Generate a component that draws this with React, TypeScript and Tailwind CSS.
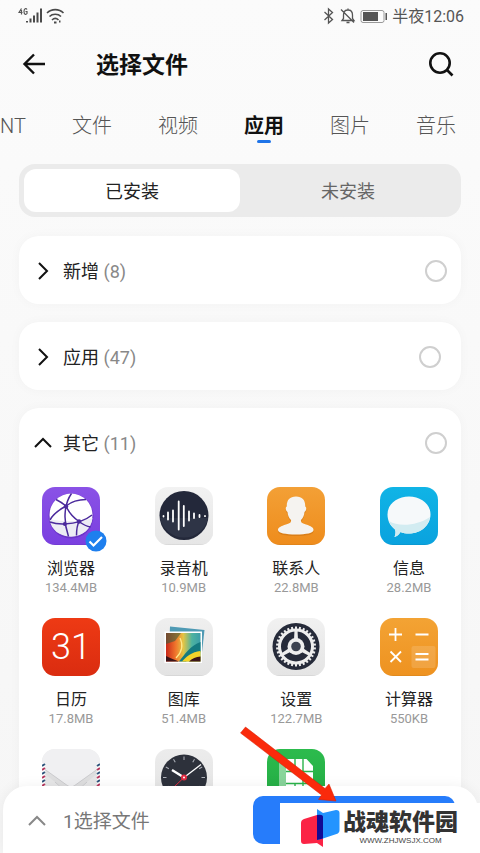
import React, { useState } from "react";

const GEAR_TEETH = Array.from({ length: 30 }, (_, i) => i * 12);

function Tile({ id, from, to, children }: { id: string; from: string; to: string; children?: React.ReactNode }) {
  return (
    <svg viewBox="0 0 58 58" className="block size-[58px]" aria-hidden="true">
      <defs>
        <linearGradient id={id} x1="0" y1="0" x2="0" y2="1">
          <stop offset="0" stopColor={from} />
          <stop offset="1" stopColor={to} />
        </linearGradient>
        <clipPath id={id + "-clip"}>
          <rect width="58" height="58" rx="13" />
        </clipPath>
      </defs>
      <g clipPath={`url(#${id}-clip)`}>
        <rect width="58" height="58" fill={`url(#${id})`} />
        <path d="M0 45c0 9 5 12.500 13 12.500h32c8 0 13-3.500 13-12.500v13H0z" fill="#000" opacity=".1" />
        {children}
      </g>
    </svg>
  );
}

const BrowserIcon = () => (
  <Tile id="browser" from="#8a52e6" to="#7a3fe0">
    <circle cx="29" cy="29" r="22.500" fill="#5a25b4" opacity=".5" />
    <circle cx="29" cy="28" r="21.500" fill="#fff" />
    <path d="M7.500 32c10 3 32 3 43-1-1 11-10 18.500-21.500 18.500S9 43 7.500 32z" fill="#ececf4" />
    <g fill="none" stroke="#4b2a9c" strokeWidth="1.500">
      <path d="M29.500 6.500C22 17 21 34 26.500 49.500" />
      <path d="M14 12.500c4 2 7 4 10 6.500c3 7 8 12 13 15.500c4 3 8 5 11.500 5.500" />
      <path d="M44 12.500C37 12.500 29 15 24 19C15 24 10 29 8 33" />
      <path d="M8 35c4 1.500 9 2.200 14.500 2C34 36.500 44 33 50 28M37 34.500c-2 4-2.500 9-2.500 14" />
    </g>
    <g fill="#4b2a9c">
      <circle cx="24" cy="19.500" r="2.200" />
      <circle cx="37" cy="34.500" r="2.200" />
      <circle cx="22.800" cy="37" r="2" />
    </g>
  </Tile>
);

const RecorderIcon = () => (
  <Tile id="recorder" from="#f2f2f2" to="#e6e6e6">
    <circle cx="29" cy="28.500" r="24.500" fill="#23283a" />
    <path d="M5 31h48a24.500 24.500 0 0 1-48 0z" fill="#2e3446" />
    <g stroke="#fff" strokeWidth="1.800" strokeLinecap="round">
      <path d="M8.500 29v.500M13 25.500v7M18 23.500v11M23.700 14.500v28M28.800 19v20M34 24.500v9M39 26.500v4.500M44.500 28v2M50 29v.200" />
    </g>
  </Tile>
);

const ContactsIcon = () => (
  <Tile id="contacts" from="#f3a036" to="#ee8c1c">
    <path
      d="M29 10c6.500 0 9.500 4 9.200 10 1.600.500 1.300 4-.700 5.500-.500 4-1.500 6-3.500 8-.500 3 1.500 3.500 5 4.500 5 1.500 7.500 3 7.500 5.500 0 3-7 4.500-17.500 4.500S11 46.500 11 43.500C11 41 14 39.500 19 38c3.500-1 5.500-1.500 5-4.500-2-2-3-4-3.500-8-2-1.500-2.300-5-.700-5.500C19.500 14 22.500 10 29 10z"
      fill="#a85a08"
      opacity=".3"
      transform="translate(0 1)"
    />
    <path
      d="M29 9.500c6.500 0 9.500 4 9.200 10 1.600.500 1.300 4-.700 5.500-.500 4-1.500 6-3.500 8-.500 3 1.500 3.500 5 4.500 5 1.500 7.500 3 7.500 5.500 0 3-7 4.500-17.500 4.500S11 46 11 43c0-2.500 3-4 8-5.500 3.500-1 5.500-1.500 5-4.500-2-2-3-4-3.500-8-2-1.500-2.300-5-.700-5.500-.300-6 2.700-10 9.200-10z"
      fill="#f5f3f0"
    />
  </Tile>
);

const MessageIcon = () => (
  <Tile id="message" from="#10b4e6" to="#0aa2de">
    <path d="M29 9.500c12 0 21.500 7.500 21.500 18S41 46.500 29 46.500c-3 0-6-.500-8.500-1.500-1.500 2.500-3.500 4.500-6 5 1-2.500 1.500-5 .5-7.500-4.500-3.500-7.500-8.500-7.500-15 0-10.500 9.500-18 21.500-18z" fill="#f6f9fa" />
    <path d="M9 34c9 6 28 5 41-4-1.500 10-10 16.500-21 16.500-3 0-6-.500-8.500-1.500-1.500 2.500-3.500 4.500-6 5 1-2.500 1.500-5 .5-7.500-3-2.300-5-5.500-6-8.500z" fill="#d2ecf1" />
  </Tile>
);

const CalendarIcon = () => (
  <span className="flex size-[58px] items-center justify-center rounded-[13px] bg-linear-to-b from-[#ee3a14] to-[#da2c10] text-[36px] leading-[58px] font-light text-white">
    31
  </span>
);

const GalleryIcon = () => (
  <Tile id="gallery" from="#efefef" to="#e3e3e3">
    <defs>
      <linearGradient id="photo" x1="0" y1="0" x2="1" y2="0">
        <stop offset="0" stopColor="#c9281a" />
        <stop offset=".28" stopColor="#f0762c" />
        <stop offset=".5" stopColor="#e4c543" />
        <stop offset=".75" stopColor="#4db3a0" />
        <stop offset="1" stopColor="#3a9da8" />
      </linearGradient>
    </defs>
    <path d="M15 8.500l34.500 3.500-3.500 31-32-8z" fill="#4f9ab4" />
    <path d="M9.500 13.500h37.500v31.500H9.500z" fill="#fff" />
    <path d="M11 15h34.500v28.500H11z" fill="url(#photo)" />
    <path d="M11 15h15l-6 8-9 3z" fill="#39603f" opacity=".6" />
    <path d="M24 43.500C29 37 36 27 45.500 24v10L31 43.500z" fill="#147a80" />
    <path d="M27 43.500c4-5 10-9.500 18.500-10.500v10.500z" fill="#f3d32a" />
    <path d="M34 43.500c3-3 7-4.500 11.500-5v5zM11 38c4 2 9 4 13 5.500H11z" fill="#3b1418" />
    <path d="M25 20c4 8 1 15-4 20" fill="none" stroke="#ffe98a" strokeWidth="1.200" />
  </Tile>
);

const SettingsIcon = () => (
  <Tile id="settings" from="#f1f1f1" to="#e4e4e4">
    <circle cx="29" cy="28.500" r="23.500" fill="#262b3a" />
    <circle cx="29" cy="28.500" r="16.500" fill="none" stroke="#eee" strokeWidth="3" />
    {GEAR_TEETH.map((angle) => (
      <path key={angle} d="M28 8.500h2v4h-2z" fill="#eee" transform={`rotate(${angle} 29 28.500)`} />
    ))}
    {[0, 120, 240].map((angle) => (
      <path key={angle} d="M27.500 12h3l.5 10h-4z" fill="#eee" transform={`rotate(${angle} 29 28.500)`} />
    ))}
    <circle cx="29" cy="28.500" r="8.500" fill="#eee" />
    <circle cx="29" cy="28.500" r="4.800" fill="#3c4250" />
  </Tile>
);

const CalculatorIcon = () => (
  <Tile id="calculator" from="#f3a334" to="#ee9220">
    <rect x="31.500" y="28" width="24" height="22" rx="2" fill="#fff" opacity=".14" />
    <g stroke="#fff" strokeWidth="1.800">
      <path d="M9 16.500h13M15.500 10v13M35.500 16.500h13M35.500 36h13M35.500 41.500h13M10.500 33.500l10.500 10.500M21 33.500L10.500 44" />
    </g>
  </Tile>
);

const MailIcon = () => (
  <Tile id="mail" from="#ececec" to="#dedede">
    <path d="M4 20h50v38H4z" fill="#dededf" />
    <path d="M3 25l20 16L3 58zM55 25L35 41l20 17z" fill="#e6e6e7" />
    <path d="M0 0h58v18L32 37q-3 2-6 0L0 18z" fill="#f0f0f2" />
    <path d="M3 20.500L26 37q3 2 6 0l23-16.500M13 33l10 9M45 33l-10 9" fill="none" stroke="#c8c8cc" strokeWidth=".900" />
    <path d="M1.500 14v44M56.500 14v44" stroke="#fff" strokeWidth="3" />
    <path d="M0 17l3-2M0 25l3-2M0 33l3-2M0 41l3-2M55 17l3-2M55 25l3-2M55 33l3-2M55 41l3-2" stroke="#31577d" strokeWidth="2" />
    <path d="M0 21l3-2M0 29l3-2M0 37l3-2M55 21l3-2M55 29l3-2M55 37l3-2" stroke="#b63a60" strokeWidth="2" />
  </Tile>
);

const ClockIcon = () => (
  <Tile id="clock" from="#ececec" to="#e2e2e2">
    <circle cx="29" cy="28.500" r="23" fill="#2d313b" />
    <g stroke="#aeb2ba" strokeWidth="1">
      {[0, 30, 60, 90, 120, 150, 180, 210, 240, 270, 300, 330].map((angle) => (
        <path key={angle} d="M29 7.500v3.500" transform={`rotate(${angle} 29 28.500)`} />
      ))}
    </g>
    <path d="M29 28.500L17 21" stroke="#fff" strokeWidth="2.400" />
    <path d="M29 28.500L46 15.500" stroke="#fff" strokeWidth="1.300" />
    <path d="M29 28.500L19 38" stroke="#e12b42" strokeWidth="1" />
    <circle cx="29" cy="28.500" r="3" fill="#e12b42" />
    <circle cx="29" cy="28.500" r="1" fill="#fff" />
  </Tile>
);

const SimIcon = () => (
  <Tile id="sim" from="#2cbb4d" to="#22a842">
    <path d="M12 10h7v48h-7z" fill="#fff" opacity=".45" />
    <path d="M19 10h20.500l6.500 7v41H19z" fill="#fff" />
    <path d="M19 22.500h27M19 34.500h27M28 10v12.500M36 10v48M28 34.500V58" stroke="#2ab24a" strokeWidth="1.400" />
  </Tile>
);

type AppFile = { name: string; size: string; icon: () => React.JSX.Element };

const APPS: AppFile[] = [
  { name: "浏览器", size: "134.4MB", icon: BrowserIcon },
  { name: "录音机", size: "10.9MB", icon: RecorderIcon },
  { name: "联系人", size: "22.8MB", icon: ContactsIcon },
  { name: "信息", size: "28.2MB", icon: MessageIcon },
  { name: "日历", size: "17.8MB", icon: CalendarIcon },
  { name: "图库", size: "51.4MB", icon: GalleryIcon },
  { name: "设置", size: "122.7MB", icon: SettingsIcon },
  { name: "计算器", size: "550KB", icon: CalculatorIcon },
];

const MORE_APPS = [MailIcon, ClockIcon, SimIcon];

const TABS = ["NT", "文件", "视频", "应用", "图片", "音乐"];

function StatusBar() {
  return (
    <div className="flex h-8 items-center justify-between pr-4 pl-[18px] text-[#555]">
      <svg width="47" height="18" viewBox="0 0 47 18" aria-hidden="true">
        <g fill="none" stroke="#555" strokeWidth="1.200">
          <path d="M3.500 1.500L1 5.500h3.500M3.500 3v4.500M9 2.500C8 1 6 1.500 6 4.500S8 8 9 6.500v-2H7.500" />
        </g>
        <path d="M9 15.500v-1.500M12.500 15.500v-4M16 15.500V8.500M19.500 15.500V5.500M23 15.500v-14" stroke="#4a4a4a" strokeWidth="2" />
        <g fill="none" stroke="#4a4a4a" strokeWidth="1.600">
          <path d="M29 6c4.500-4.500 12-4.500 16.500 0M31.500 9.500c3-3 8.500-3 11.500 0M34 13c2-2 4.500-2 6.500 0" />
        </g>
        <path d="M36 15.500h2.500M41 14.500h1.500" stroke="#4a4a4a" strokeWidth="2" />
      </svg>
      <div className="flex items-center">
        <svg width="65" height="18" viewBox="0 0 65 18" aria-hidden="true">
          <g fill="none" stroke="#555" strokeWidth="1.300">
            <path d="M1.500 5l8 7.500-4 3.500V2l4 3.500-8 7.500" />
            <path d="M19 13.500h12l-1.500-2V8c0-3-1.500-5-4.500-5s-4.500 2-4.500 5v3.500zM18 2.500l13 13M23.500 15.500h3M25 3V1.500" />
            <rect x="38" y="3.500" width="23" height="12" rx="2" stroke="#999" strokeWidth="1" />
          </g>
          <path d="M40 5h15v9H40z" fill="#555" />
          <path d="M62.500 6h1.500v7h-1.500z" fill="#555" />
        </svg>
        <span className="ml-1 pt-0.5 text-base leading-5 text-[#555]">半夜12:06</span>
      </div>
    </div>
  );
}

function Chevron({ up, className }: { up?: boolean; className: string }) {
  return (
    <svg viewBox="0 0 20 20" className={className} fill="none" stroke="currentColor" strokeWidth="2" aria-hidden="true">
      <path d={up ? "M2 14l8-8 8 8" : "M6 2l8 8-8 8"} />
    </svg>
  );
}

function GroupHeader({ label, count, open, inset }: { label: string; count: number; open?: boolean; inset: string }) {
  return (
    <div className={"flex h-[68px] items-center justify-between pt-0.5 pl-3.5 " + inset}>
      <button type="button" aria-expanded={!!open} className="flex items-center gap-2.5 text-lg leading-6 text-[#222]">
        <Chevron up={open} className="size-5 text-[#111]" />
        <span className="pt-0.5">
          {label} <span className="text-[#888]">({count})</span>
        </span>
      </button>
      <input
        type="checkbox"
        aria-label={label}
        className="size-[22px] appearance-none rounded-full border-2 border-[#cfcfcf] checked:border-[#267cfb] checked:bg-[#267cfb]"
      />
    </div>
  );
}

function AppItem({ app, defaultChecked }: { app: AppFile; defaultChecked: boolean }) {
  const Icon = app.icon;
  return (
    <label className="relative flex w-[58px] flex-col items-center">
      <input type="checkbox" defaultChecked={defaultChecked} className="peer sr-only" />
      <Icon />
      <svg viewBox="0 0 22 22" className="absolute top-[43px] left-[43px] hidden size-[22px] peer-checked:block" aria-hidden="true">
        <circle cx="11" cy="11" r="10.500" fill="#1e7fee" />
        <path d="M4.500 11.500l4 4L17 7" fill="none" stroke="#fff" strokeWidth="2.200" />
      </svg>
      <span className="mt-3.5 text-base leading-5 whitespace-nowrap text-[#222]">{app.name}</span>
      <span className="text-[13px] leading-[18px] text-[#999]">{app.size}</span>
    </label>
  );
}

function SiteMark() {
  return (
    <div className="absolute right-0 bottom-0 flex h-[50px] w-[200px] items-start bg-white pl-[21px]">
      <svg width="39" height="38" viewBox="0 0 39 38" className="mt-1.5 shrink-0" aria-hidden="true">
        <path d="M0 14q0-3 3-4l13-4q6-1 6 2v30l-6-4-13 1q-3 0-3-3z" fill="#fb2345" />
        <path d="M16 0l6 4 13-3q3.500 0 3.500 3v17q0 3-3 4L22 29.500l-6 1.500z" fill="#2394ff" />
        <path d="M16 6q6-1 6 2v21.500l-6 1.500z" fill="#120a94" />
      </svg>
      <div className="ml-[3px] flex flex-col items-center pt-1.5">
        <span className="text-[23px] leading-[27px] font-black whitespace-nowrap text-[#333]">战魂软件园</span>
        <span className="font-['Liberation_Sans',sans-serif] text-[8px] leading-[10px] text-[#444]">WWW.ZHJWSJX.COM</span>
      </div>
    </div>
  );
}

export default function App() {
  const [tab, setTab] = useState("应用");
  return (
    <div className="relative flex h-screen flex-col overflow-hidden bg-linear-to-b from-[#fbfbfb] to-[#f6f6f6] font-['Roboto','Noto_Sans_CJK_SC',sans-serif]">
      <StatusBar />
      <header className="flex h-16 shrink-0 items-center pr-[25px] pl-[21px]">
        <button type="button" aria-label="返回">
          <svg viewBox="0 0 26 26" className="block size-[26px]" fill="none" stroke="#111" strokeWidth="2.400" aria-hidden="true">
            <path d="M24 13H3.500M13 3.500L3.500 13l9.500 9.500" />
          </svg>
        </button>
        <h1 className="ml-[49px] flex-1 pt-1 text-[23px] leading-8 font-bold text-[#111]">选择文件</h1>
        <button type="button" aria-label="搜索">
          <svg viewBox="0 0 28 28" className="block size-7" fill="none" stroke="#111" strokeWidth="2.600" aria-hidden="true">
            <circle cx="13" cy="13" r="9.700" />
            <path d="M19.500 19.500l6 6" />
          </svg>
        </button>
      </header>

      <nav className="flex shrink-0 justify-between pt-4 pr-6 text-xl leading-7">
        {TABS.map((name) => (
          <button
            key={name}
            type="button"
            onClick={() => setTab(name)}
            className={"flex h-[52px] flex-col items-center " + (name === tab ? "font-bold text-[#111]" : "font-light text-[#555]")}
          >
            {name}
            {name === tab && <span className="h-[3px] w-3.5 rounded-full bg-[#1f74e8]" />}
          </button>
        ))}
      </nav>

      <main className="flex flex-col gap-[18px] px-[19px]">
        <div className="mb-px flex h-[53px] shrink-0 rounded-2xl bg-[#ebebeb] p-[5px] text-lg">
          <button type="button" className="flex-1 rounded-xl bg-white pt-0.5 text-[#222]">已安装</button>
          <button type="button" className="flex-1 pt-0.5 text-[#666]">未安装</button>
        </div>
        <section className="rounded-[20px] bg-white shadow-[0_0_12px_rgba(0,0,0,0.03)]">
          <GroupHeader label="新增" count={8} inset="pr-3.5" />
        </section>
        <section className="rounded-[20px] bg-white shadow-[0_0_12px_rgba(0,0,0,0.03)]">
          <GroupHeader label="应用" count={47} inset="pr-5" />
        </section>
        <section className="rounded-t-[20px] bg-white shadow-[0_0_12px_rgba(0,0,0,0.03)]">
          <GroupHeader label="其它" count={11} open inset="pr-3.5" />
          <div className="grid grid-cols-[repeat(4,58px)] justify-between gap-y-[21px] px-[23px] pt-[11px]">
            {APPS.map((app, i) => (
              <AppItem key={app.name} app={app} defaultChecked={i === 0} />
            ))}
            {MORE_APPS.map((Icon, i) => (
              <Icon key={i} />
            ))}
          </div>
        </section>
      </main>

      <footer className="absolute inset-x-0 bottom-0">
        <div className="mr-0.5 ml-[3px] flex h-[67px] items-start justify-between rounded-t-3xl bg-white pt-2.5 pr-[23px] pl-6 shadow-[0_0_14px_rgba(0,0,0,0.06)]">
          <button type="button" className="flex h-12 items-center gap-4 pt-0.5 text-[#777]">
            <Chevron up className="size-5 text-[#888]" />
            <span className="pt-0.5 text-[19px] leading-7">1选择文件</span>
          </button>
          <button type="button" aria-label="发送" className="h-12 w-[202px] rounded-[10px] bg-[#267cfb]" />
        </div>
        <SiteMark />
        <svg viewBox="0 0 100 80" className="absolute right-[142px] bottom-[50px] h-20 w-[100px]" aria-hidden="true">
          <path d="M7.500 4l79.500 61.500 4-4.500 7 17-17.500-1.500 3-4.500L2.500 10z" fill="#fa2a0b" stroke="#d51c00" strokeWidth=".500" />
        </svg>
      </footer>
    </div>
  );
}
